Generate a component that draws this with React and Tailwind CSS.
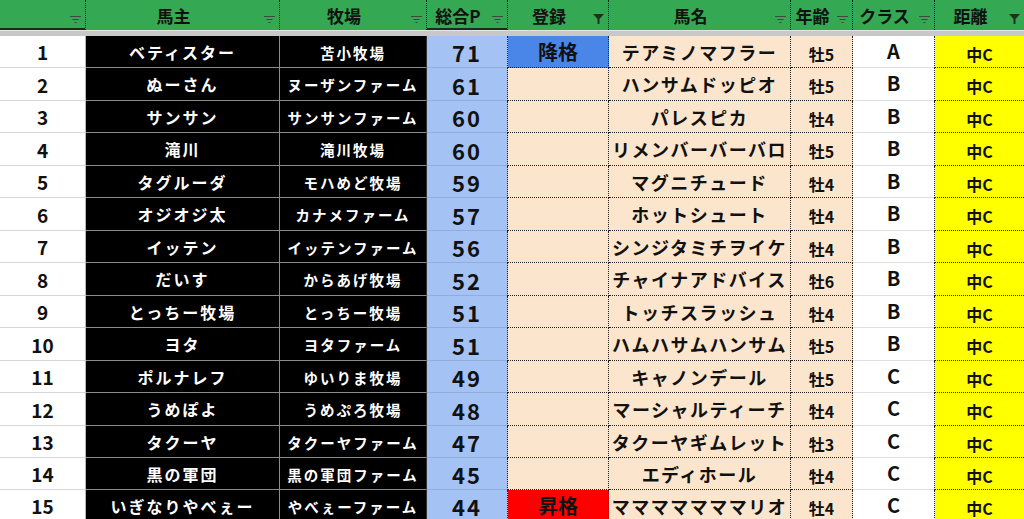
import React from "react";

const rows = [
  [1, "ベティスター", "苫小牧場", 71, "降格", "テアミノマフラー", "牡5", "A"],
  [2, "ぬーさん", "ヌーザンファーム", 61, "", "ハンサムドッピオ", "牡5", "B"],
  [3, "サンサン", "サンサンファーム", 60, "", "パレスピカ", "牡4", "B"],
  [4, "滝川", "滝川牧場", 60, "", "リメンバーバーバロ", "牡5", "B"],
  [5, "タグルーダ", "モハめど牧場", 59, "", "マグニチュード", "牡4", "B"],
  [6, "オジオジ太", "カナメファーム", 57, "", "ホットシュート", "牡4", "B"],
  [7, "イッテン", "イッテンファーム", 56, "", "シンジタミチヲイケ", "牡4", "B"],
  [8, "だいす", "からあげ牧場", 52, "", "チャイナアドバイス", "牡6", "B"],
  [9, "とっちー牧場", "とっちー牧場", 51, "", "トッチスラッシュ", "牡4", "B"],
  [10, "ヨタ", "ヨタファーム", 51, "", "ハムハサムハンサム", "牡5", "B"],
  [11, "ポルナレフ", "ゆいりま牧場", 49, "", "キャノンデール", "牡5", "C"],
  [12, "うめぽよ", "うめぷろ牧場", 48, "", "マーシャルティーチ", "牡4", "C"],
  [13, "タクーヤ", "タクーヤファーム", 47, "", "タクーヤギムレット", "牡3", "C"],
  [14, "黒の軍団", "黒の軍団ファーム", 45, "", "エディホール", "牡4", "C"],
  [15, "いぎなりやべぇー", "やべぇーファーム", 44, "昇格", "マママママママリオ", "牡4", "C"],
];

const tallRows = [2, 4, 6, 8, 10, 12];

function FilterIcon({ active }) {
  if (active) {
    return (
      <svg width="11" height="10" viewBox="0 0 11 10">
        <polygon points="0,0 11,0 6.5,5 6.5,10 4.5,10 4.5,5" fill="#1c3320" />
      </svg>
    );
  }
  return (
    <svg width="11" height="8" viewBox="0 0 11 8">
      <rect x="0" y="0" width="11" height="1" fill="#3a4a3d" />
      <rect x="2.5" y="3" width="6" height="1" fill="#3a4a3d" />
      <rect x="4.5" y="6" width="2" height="1" fill="#3a4a3d" />
    </svg>
  );
}

function HeaderCell({ label, active, last, selected }) {
  return (
    <div
      className={
        "flex h-full items-stretch " +
        (last ? "" : "border-r! border-dotted! border-[#1a1a1a]! ") +
        (selected ? "shadow-[inset_0_-2px_0_#1a2a1d]" : "")
      }
    >
      <div className="flex flex-1 items-center justify-center pl-[2px] text-[17px] leading-none font-bold text-[#111]">
        {label}
      </div>
      <div className="flex w-[20px] items-end justify-center pb-[6px]">
        <FilterIcon active={active} />
      </div>
    </div>
  );
}

export default function App() {
  return (
    <div className="h-[519px] w-[1024px] overflow-hidden bg-white font-['Noto_Sans_CJK_JP','Noto_Sans',sans-serif] leading-none">
      <div className="grid h-[30px] grid-cols-[86px_194px_147px_81px_101px_182px_62px_82px_89px] bg-[#34a853]">
        <HeaderCell label="" selected />
        <HeaderCell label="馬主" />
        <HeaderCell label="牧場" />
        <HeaderCell label="総合P" selected />
        <HeaderCell label="登録" active />
        <HeaderCell label="馬名" />
        <HeaderCell label="年齢" />
        <HeaderCell label="クラス" />
        <HeaderCell label="距離" active last />
      </div>
      <div className="h-[6px] bg-[#c8c8c8] shadow-[inset_0_1px_0_#e4e4e4]" />
      <div className="flex flex-col">
        {rows.map((r) => (
          <div
            key={r[0]}
            className={
              "grid shrink-0 grid-cols-[86px_194px_147px_81px_101px_182px_62px_82px_89px] " +
              (tallRows.includes(r[0]) ? "h-[33px]" : "h-[32px]")
            }
          >
            <div className="flex items-center justify-center border-r! border-b! border-solid! border-b-[#d6d6d6]! border-r-[#b8b8b8]! bg-white text-[19px] leading-none font-bold text-[#111]">
              {r[0]}
            </div>
            <div className="flex items-center justify-center border-r! border-b! border-solid! border-[#8c8c8c]! bg-black text-[16px] leading-none font-bold tracking-[2px] text-white">
              {r[1]}
            </div>
            <div className="flex items-center justify-center border-r! border-b! border-solid! border-b-[#8c8c8c]! border-r-[#333]! bg-black pt-[3px] text-[14.5px] leading-none font-bold tracking-[2px] text-white">
              {r[2]}
            </div>
            <div className="flex items-center justify-center border-r! border-dotted! border-[#222]! shadow-[inset_0_-1px_0_#93acd8] bg-[#a4c2f4] text-[22px] leading-none font-bold tracking-[2px] text-[#111]">
              {r[3]}
            </div>
            <div
              className={
                "flex items-center justify-center border-r! border-b! border-dotted! border-[#222]! text-[20px] leading-none font-bold text-[#111] " +
                (r[4] === "降格" ? "bg-[#4a86e8]" : r[4] === "昇格" ? "bg-[#ff0000]" : "bg-[#fce5cd]")
              }
            >
              {r[4]}
            </div>
            <div className="flex items-center justify-center border-r! border-b! border-dotted! border-[#222]! bg-[#fce5cd] text-[18px] leading-none font-bold tracking-[1.5px] text-[#111]">
              {r[5]}
            </div>
            <div className="flex items-center justify-center border-r! border-b! border-dotted! border-[#222]! bg-[#fce5cd] pt-[4px] text-[16px] leading-none font-bold text-[#111]">
              {r[6]}
            </div>
            <div className="flex items-center justify-center border-r! border-dotted! border-[#222]! shadow-[inset_0_-1px_0_#e0e0e0] bg-white pb-[3px] text-[20px] leading-none font-bold text-[#111]">
              {r[7]}
            </div>
            <div className="flex items-center justify-center border-b! border-dotted! border-[#222]! bg-[#ffff00] pt-[4px] text-[16px] leading-none font-bold text-[#111]">
              中C
            </div>
          </div>
        ))}
      </div>
    </div>
  );
}
